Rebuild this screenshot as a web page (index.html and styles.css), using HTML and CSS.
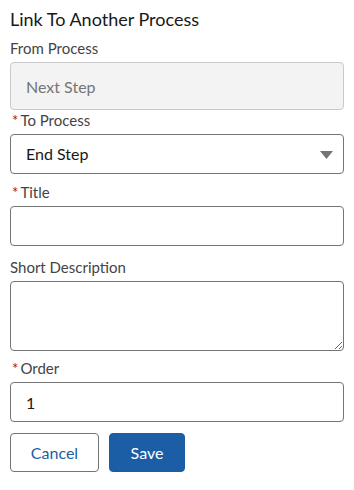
FILE: index.html
```html
<!DOCTYPE html>
<html lang="en">
<head>
    <meta charset="UTF-8">
    <meta name="viewport" content="width=device-width, initial-scale=1.0">
    <title>Link To Another Process</title>
    <link rel="stylesheet" href="styles.css">
</head>
<body>
    <div class="link-form">
        <h2 class="form-title">Link To Another Process</h2>

        <div class="field field-first">
            <label class="field-label">From Process</label>
            <input class="input input-disabled" type="text" value="Next Step" disabled>
        </div>

        <div class="field">
            <label class="field-label"><abbr class="required">*</abbr>To Process</label>
            <div class="select-wrap">
                <div class="input select">End Step</div>
                <svg class="select-arrow" width="13" height="8" viewBox="0 0 13 8">
                    <polygon points="0,0 13,0 6.5,8" fill="#747474"/>
                </svg>
            </div>
        </div>

        <div class="field field-title">
            <label class="field-label"><abbr class="required">*</abbr>Title</label>
            <input class="input" type="text">
        </div>

        <div class="field field-desc">
            <label class="field-label">Short Description</label>
            <textarea class="input textarea"></textarea>
        </div>

        <div class="field">
            <label class="field-label"><abbr class="required">*</abbr>Order</label>
            <input class="input" type="text" value="1">
        </div>

        <div class="form-actions">
            <button class="btn btn-neutral">Cancel</button>
            <button class="btn btn-brand">Save</button>
        </div>
    </div>
</body>
</html>
```

FILE: styles.css
```css
body {
    font-family: 'Lato', 'Noto Sans', sans-serif;
    margin: 0;
    padding: 0;
    background-color: #fff;
    color: #181818;
}
.link-form {
    padding: 6px 10px;
}
.form-title {
    margin: 0 0 6px;
    font-size: 18px;
    font-weight: 400;
    line-height: 26px;
}
.field {
    margin-bottom: 8px;
}
.field-first {
    margin-bottom: 0;
}
.field-title {
    margin-bottom: 11px;
}
.field-desc {
    margin-bottom: 7px;
}
.field-label {
    display: block;
    font-size: 15px;
    line-height: 20px;
    color: #444;
    margin-bottom: 4px;
}
.required {
    color: #ba0517;
    text-decoration: none;
    margin: 0 2px 0 2px;
}
.input {
    display: block;
    box-sizing: border-box;
    width: 100%;
    height: 40px;
    padding: 0 15px;
    font-family: inherit;
    font-size: 16px;
    color: #181818;
    background: #fff;
    border: 1px solid #747474;
    border-radius: 4px;
}
.input-disabled {
    height: 48px;
    background: #f3f3f3;
    border-color: #c9c9c9;
    color: #757575;
}
.select-wrap {
    position: relative;
}
.select {
    line-height: 38px;
}
.select-arrow {
    position: absolute;
    right: 11px;
    top: 17px;
}
.textarea {
    height: 70px;
    resize: vertical;
    padding: 8px 15px;
}
.form-actions {
    display: flex;
    gap: 10px;
    margin-top: 11px;
}
.btn {
    height: 39px;
    padding: 0;
    font-family: inherit;
    font-size: 16px;
    border-radius: 4px;
    cursor: pointer;
}
.btn-neutral {
    width: 89px;
    background: #fff;
    color: #1b5ea6;
    border: 1px solid #747474;
}
.btn-brand {
    width: 76px;
    background: #1b5ea6;
    color: #fff;
    border: 1px solid #1b5ea6;
}
```
